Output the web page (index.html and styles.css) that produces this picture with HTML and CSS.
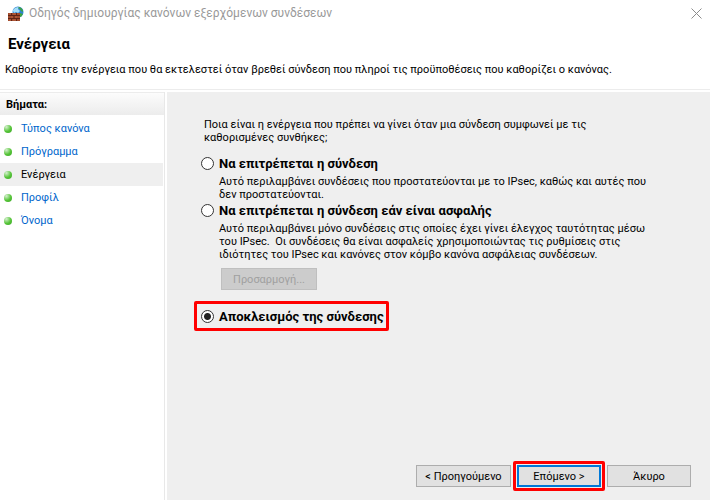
FILE: index.html
```html
<!DOCTYPE html>
<html lang="el">
<head>
<meta charset="UTF-8">
<meta name="viewport" content="width=device-width, initial-scale=1.0">
<title>Οδηγός δημιουργίας κανόνων εξερχόμενων συνδέσεων</title>
<link rel="stylesheet" href="styles.css">
</head>
<body>
  <header>
    <div class="titlebar">
      <svg class="app-icon" viewBox="0 0 16 16" aria-hidden="true">
        <circle cx="10" cy="6" r="5.5" fill="#2f83d0"/>
        <path d="M5 4 Q7 1 11 1 L10 3 L12 5 L10 7 L8 6 L6 7 L5 5Z" fill="#a4dcf8"/>
        <path d="M11 1 Q15 2 15 6 L13 5 L12 3 L10 2Z M12 7 L15 8 L13 11 L11 10Z" fill="#3ea43c"/>
        <path d="M0 7 H12 V15 H0Z" fill="#a04a2c"/>
        <path d="M0 9.5 H12 M0 12.5 H12 M3.5 7 V9.5 M8.5 7 V9.5 M6 9.5 V12.5 M3.5 12.5 V15 M8.5 12.5 V15" stroke="#5e2416" fill="none"/>
        <path d="M1 8 H3 M5 8 H8 M3 11 H5 M7 11 H9 M1 14 H3 M5 14 H8" stroke="#b9603f" fill="none"/>
      </svg>
      <span class="title">Οδηγός δημιουργίας κανόνων εξερχόμενων συνδέσεων</span>
      <button type="button" class="close" aria-label="Κλείσιμο">
        <svg viewBox="0 0 11 11"><path d="M0.5 0.5 L10.5 10.5 M10.5 0.5 L0.5 10.5" stroke="#8c8c8c" fill="none"/></svg>
      </button>
    </div>
    <h1>Ενέργεια</h1>
    <p class="intro">Καθορίστε την ενέργεια που θα εκτελεστεί όταν βρεθεί σύνδεση που πληροί τις προϋποθέσεις που καθορίζει ο κανόνας.</p>
  </header>

  <div class="wizard">
    <nav>
      <h2>Βήματα:</h2>
      <ul>
        <li><a href="#">Τύπος κανόνα</a></li>
        <li><a href="#">Πρόγραμμα</a></li>
        <li class="current"><a href="#" aria-current="step">Ενέργεια</a></li>
        <li><a href="#">Προφίλ</a></li>
        <li><a href="#">Όνομα</a></li>
      </ul>
    </nav>

    <form>
      <div class="options">
        <p class="question">Ποια είναι η ενέργεια που πρέπει να γίνει όταν μια σύνδεση συμφωνεί με τις<br>καθορισμένες συνθήκες;</p>

        <div class="option">
          <input type="radio" id="allow" name="action">
          <label for="allow">Να επιτρέπεται η σύνδεση</label>
        </div>
        <p class="description">Αυτό περιλαμβάνει συνδέσεις που προστατεύονται με το IPsec, καθώς και αυτές που<br>δεν προστατεύονται.</p>

        <div class="option">
          <input type="radio" id="secure" name="action">
          <label for="secure">Να επιτρέπεται η σύνδεση εάν είναι ασφαλής</label>
        </div>
        <p class="description">Αυτό περιλαμβάνει μόνο συνδέσεις στις οποίες έχει γίνει έλεγχος ταυτότητας μέσω<br>του IPsec.&nbsp; Οι συνδέσεις θα είναι ασφαλείς χρησιμοποιώντας τις ρυθμίσεις στις<br>ιδιότητες του IPsec και κανόνες στον κόμβο κανόνα ασφάλειας συνδέσεων.</p>
        <button type="button" class="btn customize" disabled>Προσαρμογή...</button>

        <div class="option marked">
          <input type="radio" id="block" name="action" checked>
          <label for="block">Αποκλεισμός της σύνδεσης</label>
        </div>
      </div>

      <div class="buttons">
        <button type="button" class="btn back">&lt; Προηγούμενο</button>
        <span class="next-mark"><button type="submit" class="btn next">Επόμενο &gt;</button></span>
        <button type="button" class="btn">Άκυρο</button>
      </div>
    </form>
  </div>
</body>
</html>
```

FILE: styles.css
```css
* {
  box-sizing: border-box;
}

body {
  margin: 0;
  min-height: 100vh;
  display: flex;
  flex-direction: column;
  background-color: white;
  color: black;
  font-family: Roboto, "Liberation Sans", sans-serif;
  font-size: 11px;
  line-height: 13px;
}

h1, h2, p, ul {
  margin: 0;
  padding: 0;
}

/* title and heading */
header {
  height: 90px;
  border-bottom: 1px solid #ececec;
}

.titlebar {
  display: flex;
  align-items: center;
  height: 27px;
  padding: 0 7px 0 8px;
}

.app-icon {
  width: 16px;
  height: 16px;
  margin-right: 5px;
}

.title {
  flex: 1;
  color: #999;
  font-size: 12px;
}

.close {
  width: 12px;
  height: 12px;
  padding: 0;
  border: none;
  background: none;
}

.close svg {
  display: block;
  width: 11px;
  height: 11px;
}

h1 {
  padding: 8px 8px 0;
  font-size: 15px;
  line-height: 18px;
}

.intro {
  padding: 10px 5px 0;
}

.wizard {
  flex: 1;
  display: flex;
  margin-top: 2px;
}

/* steps */
nav {
  width: 165px;
  margin-right: 2px;
  border-right: 1px solid #e8e8e8;
}

nav h2 {
  height: 23px;
  padding: 0 6px;
  border-top: 1px solid #ececec;
  background: linear-gradient(#fcfcfc, #ececec);
  font-size: 11px;
  line-height: 23px;
}

nav ul {
  list-style: none;
  margin: 2px 1px 0 0;
}

nav li {
  display: flex;
  align-items: center;
  height: 23px;
  padding-left: 4px;
}

nav li::before {
  content: "";
  width: 8px;
  height: 8px;
  margin-right: 9px;
  border-radius: 50%;
  background: radial-gradient(circle at 30% 25%, #d5f0cf, #55c437 55%, #3da52a);
}

nav a {
  color: #0066cc;
  text-decoration: none;
}

nav .current {
  background-color: #efefef;
}

nav .current a {
  color: black;
}

/* page content */
form {
  flex: 1;
  display: flex;
  flex-direction: column;
  justify-content: space-between;
  background-color: #efefef;
}

.options {
  padding: 26px 20px 0 27px;
}

.question {
  padding-left: 10px;
  margin-bottom: 12px;
}

.option {
  display: flex;
  align-items: center;
  height: 15px;
  padding-left: 7px;
  font-size: 13px;
  font-weight: bold;
}

.option input {
  appearance: none;
  width: 13px;
  height: 13px;
  margin: 0 5px 0 0;
  border: 1px solid #333;
  border-radius: 50%;
  background-color: white;
}

.option input:checked {
  background: radial-gradient(circle, #222 3px, white 4px);
}

.description {
  padding-left: 25px;
}

.option + .description {
  margin-top: 4px;
  margin-bottom: 2px;
}

.btn {
  width: 84px;
  height: 22px;
  padding: 0;
  border: 1px solid #adadad;
  background-color: #e1e1e1;
  color: black;
  font-family: inherit;
  font-size: 11px;
}

.customize {
  display: block;
  width: 96px;
  margin: 7px 0 11px 27px;
  border-color: #bfbfbf;
  background-color: #ccc;
  color: #a0a0a0;
}

.marked {
  width: 195px;
  height: 30px;
  padding-left: 4px;
  border: 3px solid #ff0000;
  border-radius: 2px;
}

.buttons {
  display: flex;
  justify-content: flex-end;
  align-items: center;
  padding: 0 19px 9px;
}

.back {
  width: 95px;
  margin-right: 2px;
}

.next-mark {
  display: flex;
  margin-right: 2px;
  padding: 1px;
  border: 3px solid #ff0000;
  border-radius: 2px;
}

.next {
  border: 2px solid #0078d7;
}
```
